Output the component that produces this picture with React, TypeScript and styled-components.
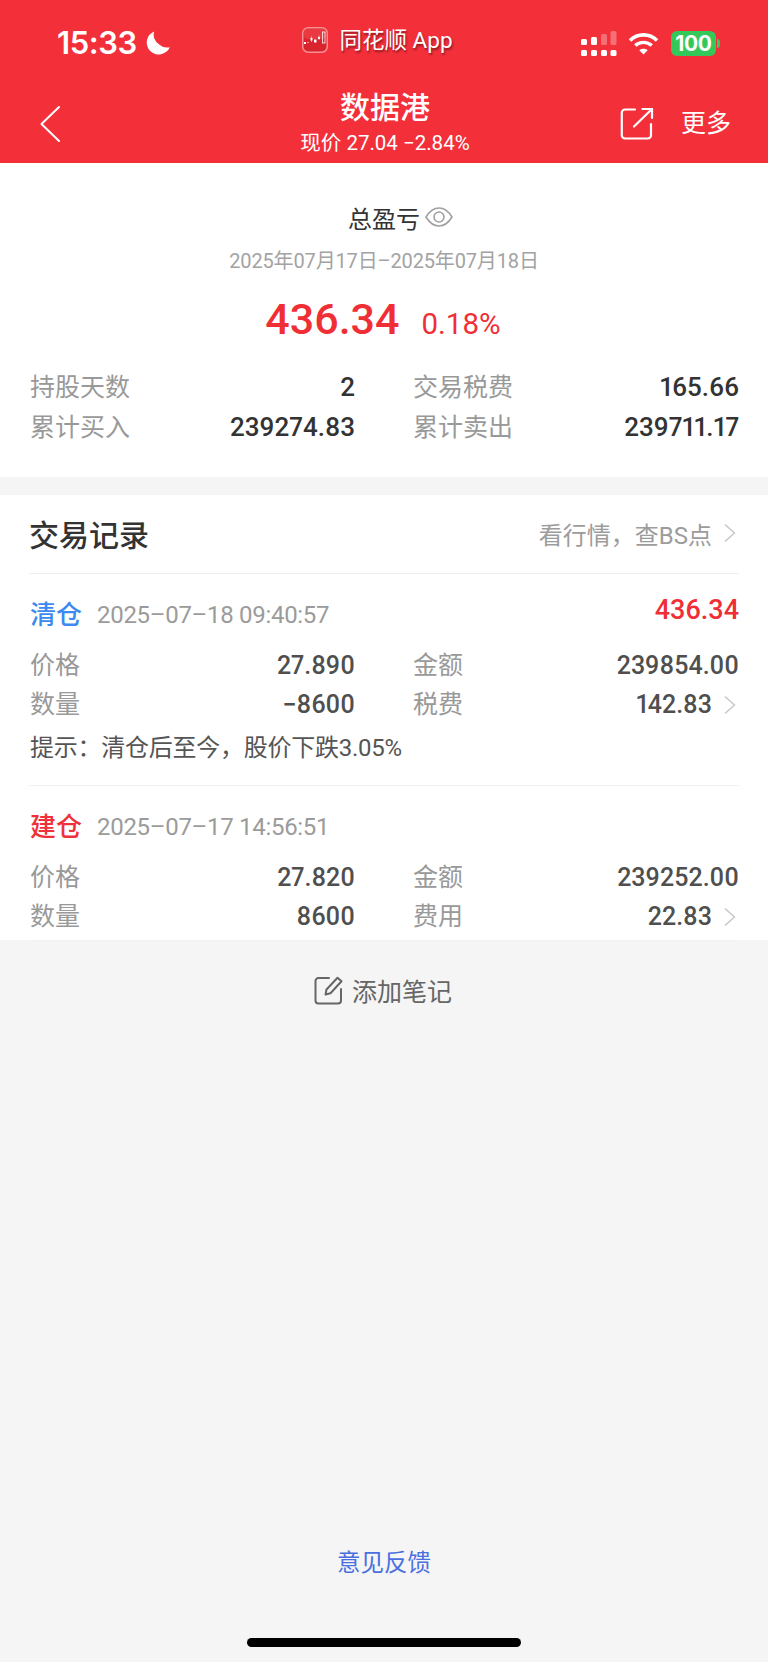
import styled, { createGlobalStyle } from 'styled-components';

const GlobalStyle = createGlobalStyle`
    html, body {
        margin: 0;
        padding: 0;
        background: #f5f5f5;
        font-family: Roboto, "Noto Sans CJK SC", sans-serif;
    }
`

const Chevron = () => (
    <ChevronSvg viewBox="0 0 12 18" fill="none">
        <path d="M1.5 1l9 8-9 8" stroke="#c8c8c8" strokeWidth="1.6" strokeLinecap="round" strokeLinejoin="round" />
    </ChevronSvg>
)

const AppIcon = () => (
    <svg width="26" height="26" viewBox="0 0 26 26">
        <rect x="0.75" y="0.75" width="24.5" height="24.5" rx="5.5" fill="#d9232d" stroke="#f88f94" strokeWidth="1.5" />
        <rect x="2" y="2" width="22" height="10" rx="4" fill="#e93a42" />
        <g fill="#fff">
            <rect x="2" y="15" width="2" height="2" />
            <rect x="8.5" y="11" width="2" height="2.5" />
            <rect x="12" y="12.5" width="2.5" height="3" />
            <rect x="16" y="10" width="2" height="2" />
        </g>
        <path d="M5 15.5h2M9.5 9.5v5.5M17 8.5v4.5" stroke="#fff" strokeWidth="0.7" opacity="0.8" />
        <rect x="20.5" y="5" width="2.5" height="11" fill="none" stroke="#fff" strokeWidth="0.8" />
    </svg>
)

const Moon = () => (
    <svg width="24" height="24" viewBox="0 0 24 24">
        <path d="M8.2 0.4A12 12 0 1 0 23.8 16.2 11.5 11.5 0 0 1 13.2 13.6 11.5 11.5 0 0 1 8.2 0.4Z" fill="#fff" />
    </svg>
)

const Signal = () => (
    <svg width="36" height="25" viewBox="0 0 36 25">
        <g fill="#fff">
            <rect x="0" y="8" width="6" height="6" rx="1.5" />
            <rect x="10" y="6" width="6" height="8" rx="1.5" />
            <rect x="0" y="19" width="6" height="6" rx="1.5" />
            <rect x="10" y="19" width="6" height="6" rx="1.5" />
            <rect x="20" y="19" width="6" height="6" rx="1.5" />
            <rect x="29.5" y="19" width="6" height="6" rx="1.5" />
        </g>
        <g fill="#fff" opacity="0.3">
            <rect x="20" y="3" width="6" height="11" rx="1.5" />
            <rect x="29.5" y="0" width="6" height="14" rx="1.5" />
        </g>
    </svg>
)

const Wifi = () => (
    <svg width="31" height="23" viewBox="0 0 31 23" fill="none" stroke="#fff" strokeLinecap="butt">
        <path d="M2 8.5C9.5 1 21.5 1 29 8.5" strokeWidth="3.6" />
        <path d="M7.3 13.6C11.8 9.3 19.2 9.3 23.7 13.6" strokeWidth="3.4" />
        <path d="M15.5 22.5L11.3 18.2C13.6 16.2 17.4 16.2 19.7 18.2Z" fill="#fff" stroke="none" />
    </svg>
)

const ShareIcon = () => (
    <svg width="34" height="34" viewBox="0 0 34 34" fill="none" stroke="#fff" strokeWidth="2.2" strokeLinecap="round" strokeLinejoin="round">
        <path d="M15 2.5H5A3.2 3.2 0 0 0 1.8 5.7V28.3A3.2 3.2 0 0 0 5 31.5H27.8A3.2 3.2 0 0 0 31 28.3V17" />
        <path d="M14 19.5L32 2" />
        <path d="M22.5 2H32V11" />
    </svg>
)

const EyeIcon = () => (
    <svg width="28" height="20" viewBox="0 0 28 20" fill="none" stroke="#a0a0a0" strokeWidth="1.6">
        <path d="M1 10C5 3.5 9 1 14 1S23 3.5 27 10C23 16.5 19 19 14 19S5 16.5 1 10Z" />
        <circle cx="14" cy="10" r="5" />
    </svg>
)

const NoteIcon = () => (
    <svg width="29" height="29" viewBox="0 0 29 29" fill="none" stroke="#666" strokeWidth="2" strokeLinecap="round" strokeLinejoin="round">
        <path d="M15 2H4.5A3 3 0 0 0 1.5 5V24.5A3 3 0 0 0 4.5 27.5H24A3 3 0 0 0 27 24.5V13" />
        <path d="M11.5 18.5L12.5 13.5 23.5 1.8 27.5 5.3 16.5 17.2Z" />
    </svg>
)

function App() {
    return (
        <Page>
            <GlobalStyle />
            <Header>
                <StatusBar>
                    <Clock>
                        15:33
                        <Moon />
                    </Clock>
                    <AppBadge>
                        <AppIcon />
                        <AppName>同花顺 App</AppName>
                    </AppBadge>
                    <StatusIcons>
                        <Signal />
                        <Wifi />
                        <Battery>100</Battery>
                    </StatusIcons>
                </StatusBar>
                <NavBar>
                    <BackButton>
                        <svg width="22" height="38" viewBox="0 0 22 38" fill="none">
                            <path d="M20 2L2.5 19 20 36" stroke="#fff" strokeWidth="2" strokeLinecap="round" strokeLinejoin="round" />
                        </svg>
                    </BackButton>
                    <TitleBlock>
                        <Title>数据港</Title>
                        <SubTitle>现价 27.04 −2.84%</SubTitle>
                    </TitleBlock>
                    <NavActions>
                        <ShareIcon />
                        <MoreText>更多</MoreText>
                    </NavActions>
                </NavBar>
            </Header>

            <SummaryCard>
                <SummaryTitle>
                    总盈亏
                    <EyeIcon />
                </SummaryTitle>
                <DateRange>2025年07月17日–2025年07月18日</DateRange>
                <Profit>
                    <ProfitValue>436.34</ProfitValue>
                    <ProfitRate>0.18%</ProfitRate>
                </Profit>
                <SummaryStats $rowHeight={40}>
                    <Stat>
                        <Label>持股天数</Label>
                        <Value $dark>2</Value>
                    </Stat>
                    <Stat>
                        <Label>交易税费</Label>
                        <Value $dark>165.66</Value>
                    </Stat>
                    <Stat>
                        <Label>累计买入</Label>
                        <Value $dark>239274.83</Value>
                    </Stat>
                    <Stat>
                        <Label>累计卖出</Label>
                        <Value $dark>239711.17</Value>
                    </Stat>
                </SummaryStats>
            </SummaryCard>

            <RecordsCard>
                <RecordsHeader>
                    <RecordsTitle>交易记录</RecordsTitle>
                    <RecordsLink>
                        看行情，查BS点
                        <Chevron />
                    </RecordsLink>
                </RecordsHeader>

                <Entry>
                    <EntryHead>
                        <EntryType $color="#3b8af0">清仓</EntryType>
                        <EntryTime>2025–07–18 09:40:57</EntryTime>
                        <EntryProfit>436.34</EntryProfit>
                    </EntryHead>
                    <StatGrid $rowHeight={39}>
                        <Stat>
                            <Label>价格</Label>
                            <Value>27.890</Value>
                        </Stat>
                        <Stat>
                            <Label>金额</Label>
                            <Value>239854.00</Value>
                        </Stat>
                        <Stat>
                            <Label>数量</Label>
                            <Value>−8600</Value>
                        </Stat>
                        <Stat>
                            <Label>税费</Label>
                            <Value>
                                142.83
                                <Chevron />
                            </Value>
                        </Stat>
                    </StatGrid>
                    <Tip>提示：清仓后至今，股价下跌3.05%</Tip>
                </Entry>

                <Entry $last>
                    <EntryHead>
                        <EntryType $color="#f0303a">建仓</EntryType>
                        <EntryTime>2025–07–17 14:56:51</EntryTime>
                    </EntryHead>
                    <StatGrid $rowHeight={39}>
                        <Stat>
                            <Label>价格</Label>
                            <Value>27.820</Value>
                        </Stat>
                        <Stat>
                            <Label>金额</Label>
                            <Value>239252.00</Value>
                        </Stat>
                        <Stat>
                            <Label>数量</Label>
                            <Value>8600</Value>
                        </Stat>
                        <Stat>
                            <Label>费用</Label>
                            <Value>
                                22.83
                                <Chevron />
                            </Value>
                        </Stat>
                    </StatGrid>
                </Entry>
            </RecordsCard>

            <AddNote>
                <NoteIcon />
                添加笔记
            </AddNote>

            <Feedback>意见反馈</Feedback>
            <HomeBar />
        </Page>
    )
}

export default App


const Page = styled.div`
    width: 768px;
    min-height: 1662px;
    display: flex;
    flex-direction: column;
    background: #f5f5f5;
`

const Header = styled.header`
    height: 163px;
    background: #f32f3a;
    color: #fff;
    border-bottom: 1px solid #f8a0a4;
    box-sizing: content-box;
    margin-bottom: -1px;
`

const StatusBar = styled.div`
    height: 80px;
    display: grid;
    grid-template-columns: 1fr auto 1fr;
    align-items: flex-start;
    padding: 26px 52px 0 57px;
    box-sizing: border-box;
`

const Clock = styled.div`
    display: flex;
    align-items: center;
    gap: 9px;
    height: 32px;
    font-family: Inter, sans-serif;
    font-size: 31px;
    font-weight: 600;
    letter-spacing: -0.4px;
    line-height: 32px;
    margin-top: 1px;
`

const AppBadge = styled.div`
    display: flex;
    align-items: center;
    gap: 11px;
    height: 28px;
    margin-right: 18px;
`

const AppName = styled.span`
    font-size: 22.5px;
    line-height: 28px;
    text-shadow: 1px 2px 2px rgba(110, 20, 25, 0.75);
`

const StatusIcons = styled.div`
    display: flex;
    align-items: center;
    justify-content: flex-end;
    gap: 11px;
    height: 25px;
    margin-top: 5px;
`

const Battery = styled.div`
    position: relative;
    width: 45px;
    height: 25px;
    margin-left: 1px;
    background: #34c759;
    border-radius: 6px;
    color: #fff;
    font-family: Inter, sans-serif;
    font-size: 21px;
    font-weight: 700;
    line-height: 25px;
    text-align: center;
    letter-spacing: -0.3px;

    &::after {
        content: "";
        position: absolute;
        right: -4px;
        top: 8px;
        width: 3px;
        height: 9px;
        border-radius: 0 3px 3px 0;
        background: #34c759;
    }
`

const NavBar = styled.div`
    height: 83px;
    display: grid;
    grid-template-columns: 1fr auto 1fr;
    padding: 0 37px 0 39px;
    box-sizing: border-box;
`

const BackButton = styled.div`
    display: flex;
    align-items: flex-start;
    padding-top: 25px;
`

const TitleBlock = styled.div`
    display: flex;
    flex-direction: column;
    align-items: center;
    padding-top: 9px;
`

const Title = styled.div`
    font-size: 30px;
    font-weight: 500;
    line-height: 38px;
`

const SubTitle = styled.div`
    font-size: 20.5px;
    line-height: 26px;
    margin-top: 3px;
`

const NavActions = styled.div`
    display: flex;
    align-items: center;
    justify-content: flex-end;
    gap: 27px;
    height: 34px;
    margin-top: 27px;
`

const MoreText = styled.span`
    font-size: 25px;
    line-height: 34px;
`

const SummaryCard = styled.section`
    background: #fff;
    padding: 37px 30px 30px;
    height: 314px;
    box-sizing: border-box;
`

const SummaryTitle = styled.div`
    display: flex;
    align-items: center;
    justify-content: center;
    gap: 5px;
    height: 34px;
    padding-left: 33px;
    color: #333;
    font-size: 24px;
`

const DateRange = styled.div`
    margin-top: 13px;
    height: 28px;
    line-height: 28px;
    text-align: center;
    font-size: 20px;
    letter-spacing: -0.15px;
    color: #a3a3a3;
`

const Profit = styled.div`
    display: flex;
    align-items: baseline;
    justify-content: center;
    gap: 22px;
    margin-top: 19px;
    height: 50px;
    color: #ef2f35;
    padding-right: 2px;
`

const ProfitValue = styled.span`
    font-size: 43px;
    font-weight: 500;
    line-height: 50px;
`

const ProfitRate = styled.span`
    font-size: 29.5px;
    line-height: 50px;
`

const StatGrid = styled.div<{ $rowHeight: number }>`
    display: grid;
    grid-template-columns: 325px 326px;
    column-gap: 58px;
    grid-auto-rows: ${(p) => p.$rowHeight}px;
`

const SummaryStats = styled(StatGrid)`
    margin-top: 23px;
`

const Stat = styled.div`
    display: flex;
    align-items: center;
    justify-content: space-between;
`

const Label = styled.span`
    font-size: 25px;
    line-height: 34px;
    margin-top: 1px;
    color: #999;
`

const ChevronSvg = styled.svg`
    width: 12px;
    height: 18px;
    flex: none;
`

const Value = styled.span<{ $dark?: boolean }>`
    display: flex;
    align-items: center;
    gap: 12px;
    font-size: ${(p) => (p.$dark ? '26px' : '25px')};
    font-variant-numeric: proportional-nums;
    font-weight: 500;
    color: ${(p) => (p.$dark ? '#333' : '#4f4f4f')};

    ${ChevronSvg} {
        margin-right: 3px;
    }
`

const RecordsCard = styled.section`
    margin-top: 18px;
    background: #fff;
    padding: 0 29px;
    height: 445px;
    box-sizing: border-box;

    ${StatGrid} {
        margin-left: 1px;
    }
`

const RecordsHeader = styled.div`
    display: flex;
    align-items: center;
    justify-content: space-between;
    height: 79px;
    box-sizing: border-box;
    border-bottom: 1px solid #eee;
    padding: 0 3px 2px 0;
`

const RecordsTitle = styled.h2`
    margin: 0;
    font-size: 30px;
    font-weight: 500;
    color: #333;
`

const RecordsLink = styled.div`
    display: flex;
    align-items: center;
    gap: 12px;
    font-size: 24px;
    color: #9c9c9c;
`

const Entry = styled.div<{ $last?: boolean }>`
    padding-top: 21px;
    padding-bottom: ${(p) => (p.$last ? '4px' : '17px')};
    border-bottom: 1px solid #f2f2f2;
`

const EntryHead = styled.div`
    display: flex;
    align-items: center;
    height: 40px;
    margin-bottom: 11px;
    padding-left: 1px;
`

const EntryType = styled.span<{ $color: string }>`
    font-size: 26px;
    line-height: 34px;
    font-weight: 500;
    color: ${(p) => p.$color};
`

const EntryTime = styled.span`
    margin-left: 15px;
    font-size: 24px;
    letter-spacing: -0.3px;
    color: #9b9b9b;
`

const EntryProfit = styled.span`
    margin-left: auto;
    margin-bottom: 10px;
    font-size: 27px;
    font-weight: 500;
    color: #ef2f35;
`

const Tip = styled.div`
    margin-top: 4px;
    margin-left: 1px;
    height: 40px;
    line-height: 40px;
    font-size: 24px;
    letter-spacing: -0.25px;
    color: #555;
`

const AddNote = styled.div`
    display: flex;
    align-items: center;
    justify-content: center;
    gap: 9px;
    margin-top: 34px;
    height: 32px;
    font-size: 25px;
    color: #666;
    padding-right: 2px;
`

const Feedback = styled.div`
    margin-top: auto;
    height: 30px;
    line-height: 30px;
    text-align: center;
    font-size: 23.5px;
    color: #4a6fe0;
`

const HomeBar = styled.div`
    align-self: center;
    width: 274px;
    height: 9px;
    margin: 60px 0 15px;
    border-radius: 5px;
    background: #000;
`
